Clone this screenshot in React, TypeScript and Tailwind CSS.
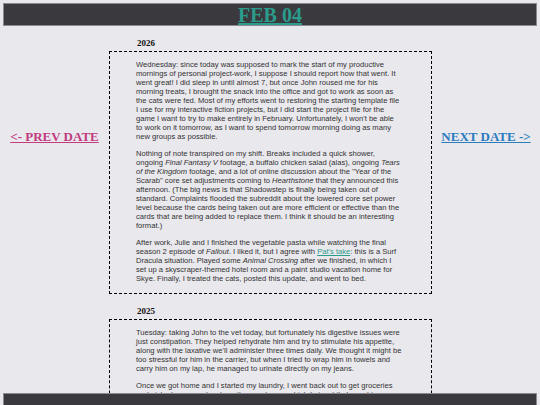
const serif = "font-['Liberation_Serif','Times_New_Roman',serif]";
const sans = "font-['Liberation_Sans',Arial,sans-serif]";

type Entry = { year: string; paragraphs: React.ReactNode[] };

const entries: Entry[] = [
  {
    year: "2026",
    paragraphs: [
      <>
        Wednesday: since today was supposed to mark the start of my productive mornings of
        personal project-work, I suppose I should report how that went. It went great! I did
        sleep in until almost 7, but once John roused me for his morning treats, I brought the
        snack into the office and got to work as soon as the cats were fed. Most of my efforts
        went to restoring the starting template file I use for my interactive fiction projects,
        but I did start the project file for the game I want to try to make entirely in
        February. Unfortunately, I won't be able to work on it tomorrow, as I want to spend
        tomorrow morning doing as many new groups as possible.
      </>,
      <>
        Nothing of note transpired on my shift. Breaks included a quick shower, ongoing{" "}
        <i>Final Fantasy V</i> footage, a buffalo chicken salad (alas), ongoing{" "}
        <i>Tears of the Kingdom</i> footage, and a lot of online discussion about the "Year of
        the Scarab" core set adjustments coming to <i>Hearthstone</i> that they announced this
        afternoon. (The big news is that Shadowstep is finally being taken out of standard.
        Complaints flooded the subreddit about the lowered core set power level because the
        cards being taken out are more efficient or effective than the cards that are being
        added to replace them. I think it should be an interesting format.)
      </>,
      <>
        After work, Julie and I finished the vegetable pasta while watching the final season 2
        episode of <i>Fallout</i>. I liked it, but I agree with{" "}
        <a href="#" className="text-[#2b9c8c] underline">
          Pat's take
        </a>
        : this is a Surf Dracula situation. Played some <i>Animal Crossing</i> after we
        finished, in which I set up a skyscraper-themed hotel room and a paint studio vacation
        home for Skye. Finally, I treated the cats, posted this update, and went to bed.
      </>,
    ],
  },
  {
    year: "2025",
    paragraphs: [
      <>
        Tuesday: taking John to the vet today, but fortunately his digestive issues were just
        constipation. They helped rehydrate him and try to stimulate his appetite, along with
        the laxative we'll administer three times daily. We thought it might be too stressful
        for him in the carrier, but when I tried to wrap him in towels and carry him on my lap,
        he managed to urinate directly on my jeans.
      </>,
      <>
        Once we got home and I started my laundry, I went back out to get groceries and picked
        up some lunch on the way home, which I ate while I caught up on the rest of my work.
      </>,
    ],
  },
];

function DayEntry({ entry }: { entry: Entry }) {
  return (
    <section className="mt-[12px]">
      <h2 className={`${serif} ml-[28px] mb-[3px] text-[9px] leading-[10px] font-bold text-[#111]`}>
        {entry.year}
      </h2>
      <div className="border border-dashed border-black pl-[26px] pr-[29px] pt-[8px] pb-[10px]">
        {entry.paragraphs.map((p, i) => (
          <p key={i} className={`${sans} text-[7.6px] leading-[9px] text-[#333] ${i > 0 ? "mt-[8px]" : ""}`}>
            {p}
          </p>
        ))}
      </div>
    </section>
  );
}

export default function App() {
  return (
    <div className="min-h-screen bg-[#e9e8ed] pt-[3px]">
      <header className="mx-[3px] h-[23px] border border-[#8b8a90] bg-[#3a393e] flex items-center justify-center">
        <a href="#" className={`${serif} text-[20px] leading-[20px] font-bold text-[#2b9c8c] underline`}>
          FEB 04
        </a>
      </header>

      <div className="flex">
        <div className="w-[109px] pt-[103px] flex justify-center">
          <a href="#" className={`${serif} text-[13px] leading-[16px] font-bold text-[#c13b7d] underline`}>
            &lt;- PREV DATE
          </a>
        </div>
        <main className="w-[323px] pb-[20px]">
          {entries.map((e) => (
            <DayEntry key={e.year} entry={e} />
          ))}
        </main>
        <div className="flex-1 pt-[103px] flex justify-center">
          <a href="#" className={`${serif} text-[13px] leading-[16px] font-bold text-[#2b7bbf] underline`}>
            NEXT DATE -&gt;
          </a>
        </div>
      </div>

      <footer className="fixed left-[3px] right-[3px] top-[393px] h-[14px] border border-[#8b8a90] bg-[#3a393e] text-center">
        <a href="#" className={`${serif} text-[10.5px] leading-[13px] text-[#2b9c8c] underline`}>
          Back to index
        </a>
      </footer>
    </div>
  );
}
